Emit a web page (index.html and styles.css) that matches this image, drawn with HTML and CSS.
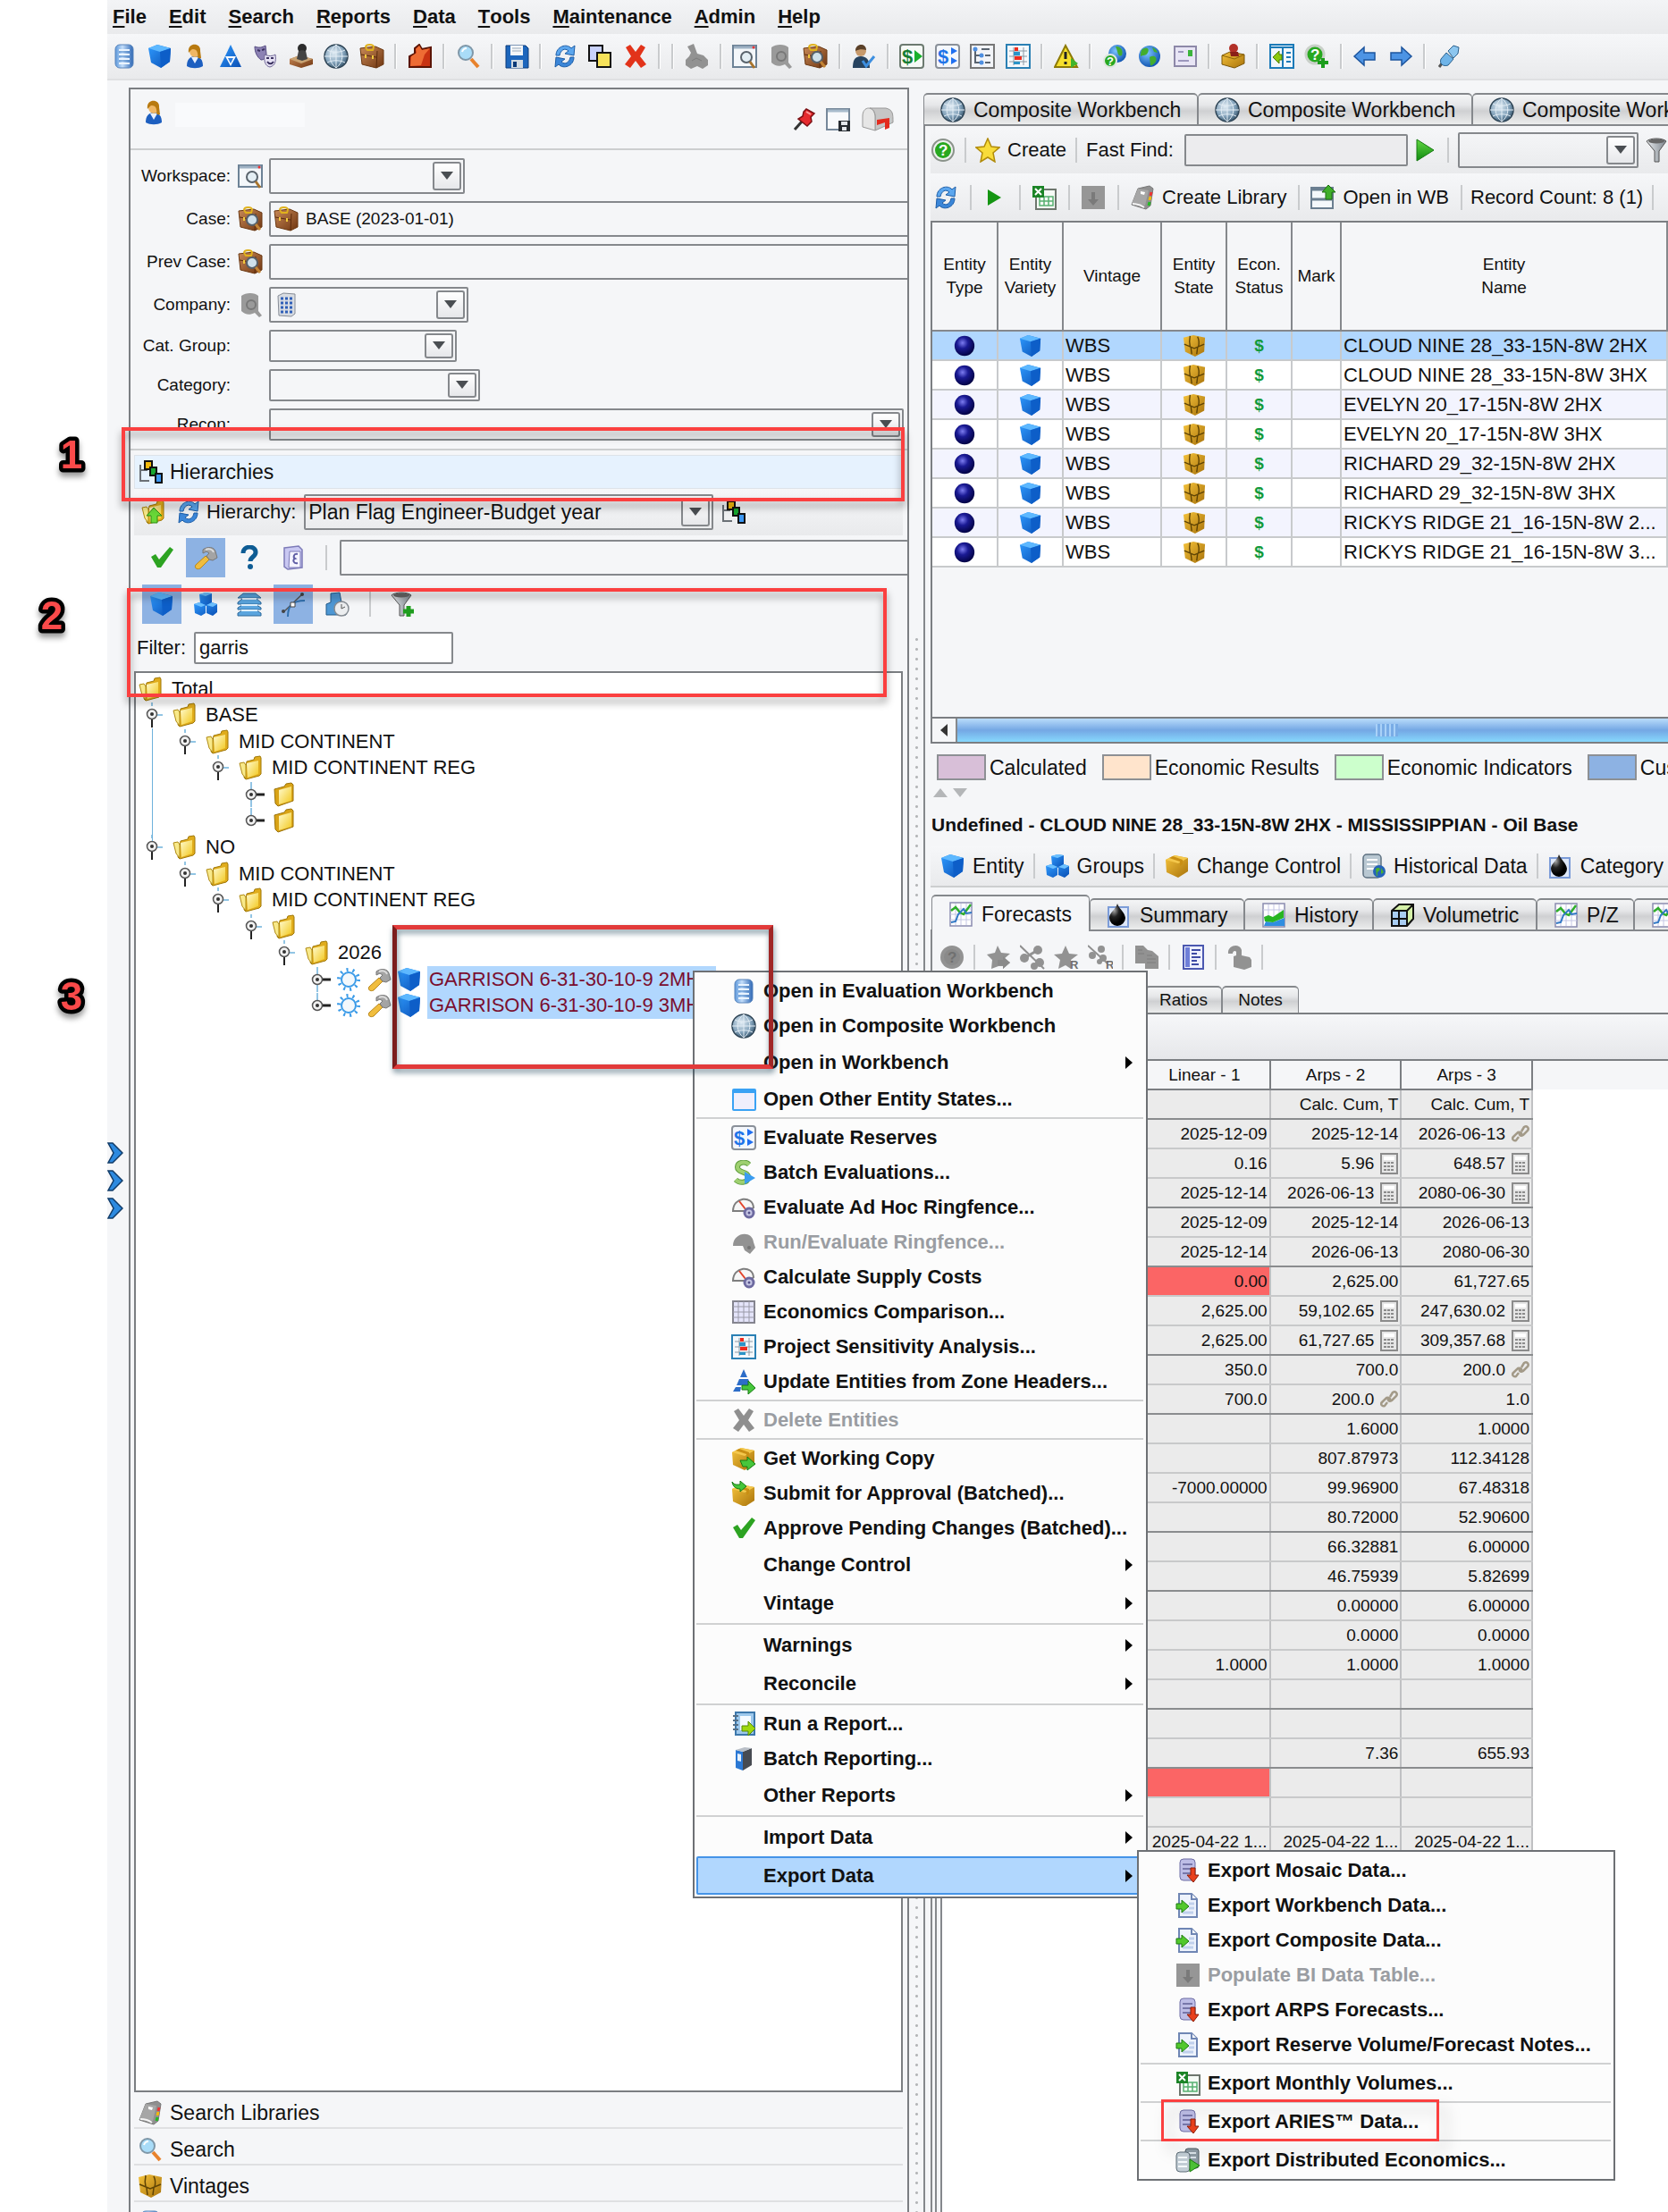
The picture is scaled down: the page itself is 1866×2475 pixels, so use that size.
FILE: index.html
```html
<!DOCTYPE html>
<html lang="en">
<head>
    <meta charset="UTF-8">
    <meta name="viewport" content="width=device-width, initial-scale=1.0">
    <title>Reserves Workbench</title>
    <link rel="stylesheet" href="styles.css">
</head>
<body>
    <!-- Icon set -->
    <svg class="defs" width="0" height="0" aria-hidden="true">
        <defs>
            <linearGradient id="gBlue" x1="0" y1="0" x2="1" y2="1"><stop offset="0" stop-color="#2f9bff"/><stop offset="1" stop-color="#0a4fb4"/></linearGradient>
            <linearGradient id="gSky" x1="0" y1="0" x2="1" y2="0"><stop offset="0" stop-color="#5c97da"/><stop offset=".4" stop-color="#c4defa"/><stop offset="1" stop-color="#2c66b4"/></linearGradient>
            <linearGradient id="gBrown" x1="0" y1="0" x2="1" y2="1"><stop offset="0" stop-color="#c98a58"/><stop offset="1" stop-color="#6f3510"/></linearGradient>
            <linearGradient id="gGold" x1="0" y1="0" x2="1" y2="1"><stop offset="0" stop-color="#f5c33c"/><stop offset="1" stop-color="#a8720a"/></linearGradient>
            <linearGradient id="gYel" x1="0" y1="0" x2="1" y2="1"><stop offset="0" stop-color="#fffbd0"/><stop offset="1" stop-color="#f2c81e"/></linearGradient>
            <linearGradient id="gGreen" x1="0" y1="0" x2="0" y2="1"><stop offset="0" stop-color="#63d843"/><stop offset="1" stop-color="#0f8a10"/></linearGradient>
            <linearGradient id="gSteel" x1="0" y1="0" x2="1" y2="0"><stop offset="0" stop-color="#e8ebee"/><stop offset="1" stop-color="#7d858d"/></linearGradient>
            <radialGradient id="gGlobe" cx=".4" cy=".35" r=".7"><stop offset="0" stop-color="#e2edf5"/><stop offset=".6" stop-color="#86a5bd"/><stop offset="1" stop-color="#33526a"/></radialGradient>
            <radialGradient id="gBall" cx=".4" cy=".35" r=".7"><stop offset="0" stop-color="#7c7cf0"/><stop offset=".4" stop-color="#1a1a94"/><stop offset="1" stop-color="#00003c"/></radialGradient>
            <radialGradient id="gEarth" cx=".4" cy=".35" r=".7"><stop offset="0" stop-color="#7cc4ff"/><stop offset="1" stop-color="#0b4fae"/></radialGradient>
            <radialGradient id="gDrop" cx=".3" cy=".3" r=".6"><stop offset="0" stop-color="#aaa"/><stop offset=".5" stop-color="#222"/><stop offset="1" stop-color="#000"/></radialGradient>
        </defs>
        <symbol id="db" viewBox="0 0 28 28"><rect x="4" y="1" width="20" height="26" rx="5" fill="url(#gSky)" stroke="#5a86bc"/><path d="M8 7h12M8 12h12M8 17h12M8 22h12" stroke="#eaf4ff" stroke-width="2"/><path d="M8 9h12M8 14h12M8 19h12" stroke="#4f86c6"/></symbol>
        <symbol id="cube" viewBox="0 0 28 28"><path d="M1 5 11 1l15 4-1 15-10 7L4 21Z" fill="url(#gBlue)"/><path d="m1 5 10-4 15 4-12 4Z" fill="#5db8ff"/><path d="m14 9 12-4-1 15-10 7Z" fill="#0d5ec8"/></symbol>
        <symbol id="user" viewBox="0 0 28 28"><path d="M5 25c0-7 3-11 9-11s9 4 9 11c-5 3-13 3-18 0Z" fill="#1d5fc0"/><path d="m10 15 4 7 4-7Z" fill="#e8f0ff"/><ellipse cx="14" cy="8" rx="6" ry="7" fill="#f0b765"/><path d="M7 10C5-2 21-2 20 8l1 8c-2 1-3 0-4-1 1-5-1-9-5-9-2 0-3 2-5 4Z" fill="#b87a10"/></symbol>
        <symbol id="tri" viewBox="0 0 28 28"><path d="M14 1 26 26H2Z" fill="url(#gBlue)"/><path d="M8 14h12l-6 11Z" fill="#fff"/><path d="M11 16h6l-3 6Z" fill="#2f7fe0"/></symbol>
        <symbol id="masks" viewBox="0 0 28 28"><path d="M2 3c5 2 8 1 12-1l1 9c0 5-3 7-6 7-4-3-7-8-7-15Z" fill="#8c82b4" stroke="#544a80"/><path d="M13 12c4 2 9 2 12 0 1 8 0 12-6 14-5-1-7-6-6-14Z" fill="#e6e2f4" stroke="#6d6494"/><path d="M15 16h3M20 16h3M16 20c2 3 5 3 7 0M5 7l3 1M10 7l3-1" stroke="#3a3160" stroke-width="2" fill="none"/></symbol>
        <symbol id="stamp" viewBox="0 0 28 28"><circle cx="15" cy="5" r="5" fill="#2c2c2c"/><path d="M13 7h4l3 10h-9Z" fill="#3c3c3c"/><path d="m1 17 11-4 15 4v6l-13 4-13-4Z" fill="url(#gBrown)"/><path d="m1 17 11-4 15 4-13 5Z" fill="#c9a373"/><path d="m11 8 8 0 2 9-6 2-6-2Z" fill="#444"/></symbol>
        <symbol id="globe" viewBox="0 0 28 28"><circle cx="14" cy="14" r="13" fill="url(#gGlobe)" stroke="#2f4556" stroke-width="1.5"/><path d="M14 1v26M1 14h26M4 7c6 3 14 3 20 0M4 21c6-3 14-3 20 0M14 1C5 8 5 20 14 27M14 1c9 7 9 19 0 26" fill="none" stroke="#e4eef6"/></symbol>
        <symbol id="case" viewBox="0 0 28 28"><path d="m1 5 17-2 9 4v16l-8 4L3 23Z" fill="url(#gBrown)" stroke="#6b3812"/><path d="M7 4c0-4 9-4 9 0M7 4l2 3h6l1-3" fill="none" stroke="#e0b21c" stroke-width="2"/><path d="m20 8-1 19M2 12l17 3" stroke="#5a2b0c"/><path d="M7 12v4M15 13v4" stroke="#f0c93c" stroke-width="2"/></symbol>
        <symbol id="case-find" viewBox="0 0 28 28"><use href="#case"/><circle cx="16" cy="15" r="6" fill="#cfe0ea" stroke="#55606a" stroke-width="2"/><path d="m20 20 5 6" stroke="#c38434" stroke-width="3"/></symbol>
        <symbol id="red-arrow" viewBox="0 0 28 28"><path d="M8 5 13 1l3 5 10-2v22H2V14l6-3Z" fill="#c93312" stroke="#5a1404" stroke-width="2"/><path d="m3 25 1-11 6-4-1-4 4-4 3 5 9-2-6 7-4 12Z" fill="#ee6c34"/></symbol>
        <symbol id="search" viewBox="0 0 28 28"><path d="m17 17 8 9" stroke="#e8822c" stroke-width="4"/><circle cx="11" cy="10" r="8" fill="#a9dcf8" stroke="#7f97a8" stroke-width="2"/><path d="M7 9c1-3 3-4 5-4" stroke="#fff" stroke-width="2" fill="none"/></symbol>
        <symbol id="save" viewBox="0 0 28 28"><path d="M2 2h22l3 3v22H2Z" fill="#1d66bc" stroke="#0c3a78"/><path d="M7 2h14v11H7Z" fill="#f4f6f8"/><path d="M9 5h10M9 8h10" stroke="#9ab"/><path d="M8 18h13v9H8Z" fill="#d3dbe2"/><path d="M10 20h4v6h-4Z" fill="#0c3a78"/></symbol>
        <symbol id="refresh" viewBox="0 0 28 28"><path d="M4 13C4 3 16-1 21 5l4-3-1 11-10-2 4-3C14 4 9 7 8 13Z" fill="#5ba6ee" stroke="#1b5ca6"/><path d="M24 15c0 10-12 14-17 8l-4 3 1-11 10 2-4 3c4 4 9 1 10-5Z" fill="#3b86d8" stroke="#1b5ca6"/></symbol>
        <symbol id="copy" viewBox="0 0 28 28"><path d="M2 2h15v17H2Z" fill="#c9d2fb" stroke="#111" stroke-width="2"/><path d="M11 10h15v16H11Z" fill="#f6e25a" stroke="#111" stroke-width="2"/></symbol>
        <symbol id="cross" viewBox="0 0 28 28"><path d="m3 4 5-3 6 8 6-8 5 3-6 10 7 9-6 4-6-8-6 8-6-4 7-9Z"/></symbol>
        <symbol id="gray-box" viewBox="0 0 28 28"><path d="m4 3 7-3 4 11 7 2 5 5v6l-6 4-6-3-7 3-6-4v-6l4-4 2-4Z" fill="#929292"/><path d="m9 19 5-3 6 3" stroke="#7c7c7c" fill="none"/></symbol>
        <symbol id="win-find" viewBox="0 0 28 28"><path d="M1 2h26v24H1Z" fill="#f4f7fa" stroke="#6d8296" stroke-width="2"/><path d="M2 4h24" stroke="#9fb2c4" stroke-width="3"/><circle cx="24" cy="4" r="1.5" fill="#e33"/><circle cx="16" cy="15" r="6" fill="#e3eef4" stroke="#59636c" stroke-width="2"/><path d="m20 20 5 7" stroke="#a9742c" stroke-width="3"/></symbol>
        <symbol id="gray-find" viewBox="0 0 28 28"><path d="M4 4c5-4 15-4 19 0v17l4 5-3 2-5-5c-6 3-11 2-15-2Z" fill="#9a9a9a"/><circle cx="15" cy="14" r="5" fill="none" stroke="#787878" stroke-width="2"/></symbol>
        <symbol id="user-check" viewBox="0 0 28 28"><path d="M2 27c0-8 2-13 9-13s10 5 10 13Z" fill="#27435f"/><circle cx="11" cy="8" r="6" fill="#c79a6c"/><path d="M5 8c0-9 12-9 12-1-4-1-8-1-12 1Z" fill="#5a4028"/><path d="m13 19 4 6 9-11" fill="none" stroke="#3d8fe0" stroke-width="3"/></symbol>
        <symbol id="tree-list" viewBox="0 0 28 28"><path d="M1 1h26v26H1Z" fill="#f2f4f8" stroke="#777" stroke-width="2"/><path d="M6 7v14h6M6 13h6M13 6h9M17 13h6M17 21h6" fill="none" stroke="#5a6470" stroke-width="2"/><circle cx="6" cy="6" r="2.5" fill="#4f8fe0"/><circle cx="13" cy="13" r="2.5" fill="#4f8fe0"/><circle cx="13" cy="21" r="2.5" fill="#4f8fe0"/></symbol>
        <symbol id="sens" viewBox="0 0 28 28"><path d="M1 1h26v26H1Z" fill="#f4f8fb" stroke="#2a80b4" stroke-width="2"/><path d="M4 8h20M4 14h20M4 20h20M9 4v20M20 4v20" stroke="#8b99a4"/><path d="M10 4h4v4h-4ZM10 14h8v4h-8Z" fill="#ee2b1e"/><path d="M9 9h7v4H9ZM9 20h7v3H9Z" fill="#2a94c8"/></symbol>
        <symbol id="warn" viewBox="0 0 28 28"><path d="M13 2 26 26H1Z" fill="#f6df2c" stroke="#8d7a06" stroke-width="2"/><path d="M13 9v8M13 20v3" stroke="#222" stroke-width="3"/><path d="m19 16 8 6-8 5Z" fill="#3fb52c"/></symbol>
        <symbol id="earth" viewBox="0 0 28 28"><circle cx="14" cy="14" r="12" fill="url(#gEarth)"/><path d="M6 6c6-3 8 0 6 4s-5 2-8 4c0-3 0-6 2-8ZM14 15c5-3 9 0 7 5-2 3-5 5-6 4ZM17 4c3 1 5 3 6 6l-4-1Z" fill="#43ad2e"/></symbol>
        <symbol id="mail" viewBox="0 0 28 28"><path d="M2 3h24v22H2Z" fill="#e8e5f5" stroke="#8d88a8" stroke-width="2"/><path d="M17 7h5v7h-5Z" fill="#3cb43c"/><path d="M6 9h6M6 19h12" stroke="#9c97bd" stroke-width="2"/></symbol>
        <symbol id="gold-stamp" viewBox="0 0 28 28"><path d="m1 13 9-4 16 3v10l-11 5-14-4Z" fill="url(#gGold)" stroke="#7a5608"/><path d="m1 13 14 4 11-5" fill="none" stroke="#8a6408"/><circle cx="14" cy="5" r="5" fill="#b23028"/><path d="M10 9h9l1 5h-9Z" fill="#8a1f18"/></symbol>
        <symbol id="dock" viewBox="0 0 28 28"><path d="M1 1h26v26H1Z" fill="#f0f6fb" stroke="#1b7ab8" stroke-width="2"/><path d="M1 4h26M15 4v23M19 10h5M19 15h5M19 20h5" stroke="#1b7ab8" stroke-width="2"/><path d="m4 15 7-7v4h3v6h-3v4Z" fill="#8cc90d" stroke="#4a7a04"/></symbol>
        <symbol id="arrow-left" viewBox="0 0 28 28"><path d="M2 14 13 4v6h12v8H13v6Z" fill="#4d94e4" stroke="#1d559e" stroke-width="1.5"/></symbol>
        <symbol id="arrow-right" viewBox="0 0 28 28"><path d="M26 14 15 4v6H3v8h12v6Z" fill="#4d94e4" stroke="#1d559e" stroke-width="1.5"/></symbol>
        <symbol id="plug" viewBox="0 0 28 28"><path d="m3 26 3-4" stroke="#555" stroke-width="3"/><path d="m5 17 6-7 8 7-6 7c-6 2-10-2-8-7Z" fill="#6fb4e8" stroke="#2b618c"/><path d="m13 8 6-6 6 2-1 7-5 5Z" fill="#8cc6ef" stroke="#2b618c"/></symbol>
        <symbol id="pin" viewBox="0 0 28 28"><path d="m3 25 8-9" stroke="#333" stroke-width="3"/><path d="m16 2 9 5-4 4 1 5-5 5-10-8 5-3 1-5Z" fill="#e62a2e" stroke="#7c1014" stroke-width="1.5"/><path d="m16 5 5 3" stroke="#ff9d9d" stroke-width="2"/></symbol>
        <symbol id="win-save" viewBox="0 0 28 28"><path d="M1 2h25v23H1Z" fill="#f8fafc" stroke="#76889a" stroke-width="2"/><path d="M2 4h23" stroke="#a8bccc" stroke-width="3"/><path d="M14 15h13v12H14Z" fill="#262b30"/><path d="M17 16h7v4h-7ZM18 22h5v4h-5Z" fill="#e4e8ec"/></symbol>
        <symbol id="mailbox" viewBox="0 0 36 28"><path d="M10 1h18c8 2 8 6 8 16l-20 9V10c0-5-3-9-6-9Z" fill="#c6c6c6" stroke="#999"/><path d="M2 10C2-2 15-2 16 10v16L2 22Z" fill="#e6e6e6" stroke="#999"/><path d="m18 14 14-2v11l-5 2v-8l-9 3Z" fill="#e32b1e"/></symbol>
        <symbol id="building" viewBox="0 0 28 28"><path d="m5 4 6-3 13 1v22l-4 3-14-1Z" fill="#d8dce2" stroke="#868c96"/><path d="M8 7h14M8 12h14M8 17h14M8 22h14" stroke="#2f5fb8" stroke-width="3" stroke-dasharray="3 2"/></symbol>
        <symbol id="hier" viewBox="0 0 28 28"><path d="M2 6v18h10M2 12h8" fill="none" stroke="#6b7076" stroke-width="2"/><path d="M7 2h8v9H7Z" fill="#f2b90c" stroke="#111" stroke-width="2"/><path d="M13 9h7v9h-7Z" fill="#17a52f" stroke="#111" stroke-width="2"/><path d="M19 16h7v10h-7Z" fill="#3d97f2" stroke="#111" stroke-width="2"/></symbol>
        <symbol id="folder" viewBox="0 0 28 28"><path d="m6 25 3-18 8-2 1-3 6-1 1 2v18l-2 2-15 4Z" fill="#e0ac1c" stroke="#a07808"/><path d="m9 9 13-3v15l-12 4Z" fill="url(#gYel)"/><path d="m8 26-4-5L1 9l5-1 2 3Z" fill="#f8e98a" stroke="#b08a12"/></symbol>
        <symbol id="folder-closed" viewBox="0 0 28 28"><path d="m3 8 11-3 2-3 6-1 2 2v18L7 27l-3-3Z" fill="#d9a316" stroke="#9a7208"/><path d="m8 9 14-4v16L8 25Z" fill="url(#gYel)"/></symbol>
        <symbol id="folder-up" viewBox="0 0 28 28"><use href="#folder"/><path d="m14 9 9 9h-5v8h-7v-8H6Z" fill="#69d838" stroke="#2d8a12"/></symbol>
        <symbol id="check" viewBox="0 0 28 28"><path d="m2 13 5-3 4 6L23 2l4 3-14 20h-4Z" fill="#2da322"/></symbol>
        <symbol id="wrench" viewBox="0 0 28 28"><path d="M3 22 14 12l4 4-10 10c-4 2-7-1-5-4Z" fill="#f0bd3e" stroke="#b8861a"/><path d="M11 5c5-4 13-3 14 2l2 7-5 3-4-1-3-4 3-3-3-2-4 2Z" fill="#a4a4a4" stroke="#777"/><path d="M14 5c4-2 8 0 9 3" fill="none" stroke="#ddd" stroke-width="2"/></symbol>
        <symbol id="question" viewBox="0 0 28 28"><path d="M7 9c0-9 14-9 14-1 0 5-6 5-6 10" fill="none" stroke="#0e5c94" stroke-width="5"/><circle cx="15" cy="24" r="3" fill="#0e5c94"/></symbol>
        <symbol id="clip" viewBox="0 0 28 28"><path d="M4 3 20 1l4 4v20l-16 2-4-3Z" fill="#c9c8f2" stroke="#7d7bb8" stroke-width="1.5"/><path d="M10 7h12v18H9Z" fill="#f5f4ff" stroke="#7d7bb8"/><path d="M19 10c-5-1-5 4-3 5-3 1-2 6 3 5" fill="none" stroke="#5f5da4" stroke-width="2"/></symbol>
        <symbol id="cubes" viewBox="0 0 28 28"><path d="m7 3 7-2 7 1v11l-6 3-7-3Z" fill="url(#gBlue)"/><path d="m7 3 7-2 7 1-7 3Z" fill="#6cc0ff"/><path d="m1 14 6-2 7 3v9l-5 3-7-3ZM15 15l6-3 6 2v9l-5 4-7-3Z" fill="url(#gBlue)"/><path d="m1 14 6-2 7 3-5 2ZM15 15l6-3 6 2-5 3Z" fill="#6cc0ff"/></symbol>
        <symbol id="layers" viewBox="0 0 28 28"><path d="M7 2h14l6 5H1ZM1 12l5-4h16l5 4v2H1ZM1 18l5-3h16l5 3v2H1ZM1 24l5-3h16l5 3v3H1Z" fill="#5ba5de" stroke="#2e699a"/><path d="M6 8h16M5 15h18M5 21h18" stroke="#dff0fc" stroke-width="2"/></symbol>
        <symbol id="curve" viewBox="0 0 28 28"><path d="M3 23 24 3" fill="none" stroke="#555" stroke-width="1.5"/><path d="M8 28c0-12 5-18 19-18" fill="none" stroke="#2f6fae" stroke-width="2"/><path d="M11 12h5v5h-5Z" fill="#fff" stroke="#444"/><circle cx="24" cy="3" r="2" fill="#444"/><circle cx="3" cy="22" r="2" fill="#444"/></symbol>
        <symbol id="cubes-clock" viewBox="0 0 28 28"><path d="m7 2 10-1 2 11 5 3v11H2V14l5-2Z" fill="#4d97d4" stroke="#235a8a"/><circle cx="19" cy="19" r="8" fill="#eceef0" stroke="#858b92" stroke-width="1.5"/><path d="M19 14v5l4-2" fill="none" stroke="#555"/></symbol>
        <symbol id="funnel" viewBox="0 0 28 28"><path d="M1 4c4-4 18-4 22 0l-8 11v12h-5V15Z" fill="url(#gSteel)" stroke="#555"/><ellipse cx="12" cy="4" rx="9" ry="2.5" fill="#666"/></symbol>
        <symbol id="funnel-plus" viewBox="0 0 28 28"><use href="#funnel"/><path d="M20 16v12M14 22h12" stroke="#1f9d1f" stroke-width="5"/></symbol>
        <symbol id="star" viewBox="0 0 28 28"><path d="m14 1 4 9 9 1-7 6 2 10-8-5-8 5 2-10-7-6 9-1Z" fill="#f8dc3a" stroke="#b18b0a" stroke-width="1.5"/></symbol>
        <symbol id="play" viewBox="0 0 28 28"><path d="m4 2 19 12L4 26Z" fill="url(#gGreen)" stroke="#177a12"/></symbol>
        <symbol id="play-small" viewBox="0 0 28 28"><path d="m6 5 15 9-15 9Z" fill="#149512"/></symbol>
        <symbol id="excel" viewBox="0 0 28 28"><path d="M5 5h22v22H5Z" fill="#f5faf5" stroke="#6d766d" stroke-width="2"/><path d="M9 13h15v10H9ZM9 18h15M14 13v10M19 13v10" fill="none" stroke="#57b070" stroke-width="1.5"/><path d="M1 1h13v13H1Z" fill="#1b8426"/><path d="m4 4 7 7M11 4l-7 7" stroke="#fff" stroke-width="2"/></symbol>
        <symbol id="gray-down" viewBox="0 0 28 28"><path d="M1 1h26v26H1Z" fill="#969696"/><path d="M12 8h4v8h4l-6 7-6-7h4Z" fill="#7a7a7a"/></symbol>
        <symbol id="book" viewBox="0 0 28 28"><path d="m9 4 13-3 4 3-3 19-5 4-16-5Z" fill="#8f8f8f" stroke="#777"/><path d="m9 4 12 2-4 17L2 21Z" fill="#a6a6a6"/><path d="M3 21c5 0 9 1 13 4" fill="none" stroke="#f4f4f4" stroke-width="2"/><path d="m24 8-1 4" stroke="#e33" stroke-width="3"/><path d="m23 13-1 4" stroke="#f2b90c" stroke-width="3"/><path d="m22 19-1 4" stroke="#2b2" stroke-width="3"/><path d="m12 7 5 1-1 3-4-1Z" fill="#fff"/></symbol>
        <symbol id="open-wb" viewBox="0 0 28 28"><path d="M1 3h24v23H1Z" fill="#f4f8fb" stroke="#6a7e90" stroke-width="2"/><path d="M2 5h23M2 16h23" stroke="#6a7e90" stroke-width="3"/><path d="m20 0 8 8h-4v8h-7V8h-4Z" fill="#3fae2a" stroke="#1e6e12"/></symbol>
        <symbol id="ball" viewBox="0 0 28 28"><circle cx="14" cy="14" r="12" fill="url(#gBall)"/></symbol>
        <symbol id="vintage" viewBox="0 0 28 28"><path d="M1 4 13 1l14 3-1 17-11 6L3 21Z" fill="url(#gGold)"/><path d="M9 2c-1 5-1 9 0 13l5 2 5-2c1-4 1-8-1-12M2 12l12 5 12-5M10 16l1 8M18 16l-1 8" fill="none" stroke="#5e4304" stroke-width="1.5"/></symbol>
        <symbol id="box" viewBox="0 0 28 28"><path d="M1 7 11 2l15 3v15l-11 7L2 21Z" fill="url(#gGold)"/><path d="m1 7 10-5 15 3-11 6Z" fill="#f4c84c"/><path d="m5 5 12 4v5l3-2V7L9 3Z" fill="#c98f14"/></symbol>
        <symbol id="box-out" viewBox="0 0 28 28"><use href="#box"/><path d="M10 16h8v-4l9 8-9 7v-4h-5Z" fill="#46c63b" stroke="#177a12"/></symbol>
        <symbol id="box-in" viewBox="0 0 28 28"><use href="#box" y="2"/><path d="M1 1c3 4 5 3 9 3V0l7 6-7 6V9C6 9 2 7 1 1Z" fill="#46c63b" stroke="#177a12"/></symbol>
        <symbol id="history-db" viewBox="0 0 28 28"><rect x="2" y="1" width="20" height="26" rx="4" fill="#b9c8d2" stroke="#5d7080" stroke-width="1.5"/><path d="M6 7h12M6 12h12M6 17h10" stroke="#fff" stroke-width="2"/><circle cx="20" cy="20" r="7" fill="#2563b8"/><path d="M16 17c5-3 6 1 3 3s1 5-2 5ZM22 16l3 5-3 2Z" fill="#49b032"/></symbol>
        <symbol id="drop" viewBox="0 0 28 28"><path d="M2 5h22v22H2Z" fill="#dfe8f8" stroke="#7c9cd8" stroke-width="2"/><path d="M12 1c2 6 8 9 9 16a9 9 0 0 1-18 0c0-6 7-9 9-16Z" fill="url(#gDrop)"/></symbol>
        <symbol id="chart" viewBox="0 0 28 28"><path d="M2 1h24v26H2Z" fill="#fff" stroke="#8a8cb0" stroke-width="1.5"/><path d="M8 2v24M14 2v24M20 2v24M2 8h24M2 14h24M2 20h24" stroke="#c4c6e4"/><path d="m3 10 5-4 5 6 4 2L25 3" fill="none" stroke="#2eae2a" stroke-width="2.5"/><path d="m3 23 5-1 3-8 6-6 3 5 6-1" fill="none" stroke="#2e76c4" stroke-width="2"/></symbol>
        <symbol id="area" viewBox="0 0 28 28"><path d="M2 1h24v26H2Z" fill="#fff" stroke="#8a8cb0" stroke-width="1.5"/><path d="M8 2v24M14 2v24M20 2v24M2 8h24" stroke="#c4c6e4"/><path d="m3 26 2-5 8 1 13-5v9Z" fill="#2f8ee0"/><path d="m3 16 5-2 5 2L25 8v9l-12 5-9-1Z" fill="#27b522"/></symbol>
        <symbol id="vol" viewBox="0 0 28 28"><path d="M2 9 10 2h16v16l-7 8H2Z" fill="#d4f0a8"/><path d="M2 9h17v17H2Z" fill="#a9cdf2"/><path d="M2 9 10 2h16v16l-7 8H2ZM2 9h17v17M19 9l7-7M10 9v17M2 18h17" fill="none" stroke="#111" stroke-width="2"/></symbol>
        <symbol id="g-star" viewBox="0 0 28 28"><path d="m13 1 4 8 10 1-7 6 7 4-8 7v-3h-5l-8 3 1-10-6-6 9-2Z" fill="#929292"/><path d="M13 17h6v-4l8 7-8 7v-4h-6Z" fill="#8a8a8a"/></symbol>
        <symbol id="g-pct" viewBox="0 0 28 28"><path d="m0 1 27 26" stroke="#8f8f8f" stroke-width="2"/><circle cx="20" cy="6" r="5" fill="#929292"/><circle cx="5" cy="15" r="5" fill="#929292"/><circle cx="22" cy="20" r="5" fill="#929292"/><circle cx="16" cy="24" r="4" fill="#929292"/><path d="m5 15 15-9" stroke="#929292" stroke-width="3"/></symbol>
        <symbol id="g-copy" viewBox="0 0 28 28"><path d="M1 1h9l5 5 5 1 7 6v14H12v-6H1Z" fill="#929292"/><path d="M14 12h6M14 16h10M14 20h10M4 6h5M4 10h7" stroke="#7c7c7c"/></symbol>
        <symbol id="g-lock" viewBox="0 0 28 28"><path d="M1 10C0 0 14-2 16 6v6l9 2 2 3v8l-8 3-12-3V13l3-1V8c-1-2-4-1-4 2Z" fill="#929292"/></symbol>
        <symbol id="sheet" viewBox="0 0 28 28"><path d="M3 1h22v26H3Z" fill="#eef0ff" stroke="#4b58b0" stroke-width="2"/><path d="M5 3h5v22H5Z" fill="#6f7fd8"/><path d="M12 6h10M12 10h6M12 14h10M12 18h6M12 22h8" stroke="#3d4aa4" stroke-width="2"/></symbol>
        <symbol id="window" viewBox="0 0 28 28"><rect x="2" y="3" width="25" height="23" rx="1" fill="#f0effc" stroke="#3aa2f4" stroke-width="2"/><path d="M2 5h25" stroke="#3aa2f4" stroke-width="4"/></symbol>
        <symbol id="batch" viewBox="0 0 28 28"><path d="M20 5c-4-4-13-3-13 3 0 7 13 4 12 12-1 6-10 6-14 2M13 1v3M13 24v3" fill="none" stroke="#5f9d3d" stroke-width="6"/><path d="M20 5c-4-4-13-3-13 3 0 7 13 4 12 12-1 6-10 6-14 2" fill="none" stroke="#9fd070" stroke-width="4"/><path d="m15 13 12 7-12 7Z" fill="#3a9cf0"/></symbol>
        <symbol id="gauge" viewBox="0 0 28 28"><path d="M2 18C2 2 24 0 25 14l-4 4Z" fill="#f6f6f6" stroke="#7e7e7e" stroke-width="2"/><path d="m9 7 7 9" stroke="#e2432c" stroke-width="2"/><circle cx="20" cy="20" r="5" fill="#c6c6e4" stroke="#6d6aa0" stroke-width="3"/><circle cx="20" cy="20" r="1.5" fill="#55528a"/></symbol>
        <symbol id="g-gauge" viewBox="0 0 28 28"><path d="M2 18C2 2 24 0 25 14l2 6-6 7-6-4-2-5Z" fill="#929292"/><circle cx="20" cy="20" r="2" fill="#737373"/></symbol>
        <symbol id="grid" viewBox="0 0 28 28"><path d="M2 2h24v24H2Z" fill="#e4e4fa" stroke="#84848e" stroke-width="2"/><path d="M8 2v24M14 2v24M20 2v24M2 8h24M2 14h24M2 20h24" stroke="#9a9aa8"/></symbol>
        <symbol id="zone" viewBox="0 0 28 28"><path d="m14 0 4 9h-8ZM9 11h10l3 7H6ZM5 20h6l-1 5H2Z" fill="#2d6dc8"/><path d="M12 18h7v-5l8 8-8 7v-5h-7Z" fill="#46c63b" stroke="#177a12"/></symbol>
        <symbol id="report" viewBox="0 0 28 28"><path d="M5 1h21v25H5Z" fill="#9dc8ec" stroke="#3d78ac" stroke-width="2"/><path d="M10 5h12v16H10Z" fill="#f5faff"/><path d="M2 5h6M2 10h6M2 15h6M2 20h6" stroke="#556f86" stroke-width="2"/><path d="M12 16h7v-5l8 8-8 8v-5h-7Z" fill="#9ed80e" stroke="#568a04"/></symbol>
        <symbol id="binder" viewBox="0 0 28 28"><path d="m5 4 8 2v21l-8-3Z" fill="#2b78d4"/><path d="m13 6 10-4v19l-10 6Z" fill="#474b52"/><path d="m5 4 10-3 8 1-10 4Z" fill="#b9bfc7"/><path d="m7 8 4 1v8l-4-1Z" fill="#e6f1fc"/></symbol>
        <symbol id="db-export" viewBox="0 0 28 28"><rect x="5" y="1" width="17" height="24" rx="4" fill="#bdbde6" stroke="#6d6da4"/><path d="M8 7h11M8 12h11M8 17h11" stroke="#77a" stroke-width="2"/><path d="M17 11h5v8h4l-6 8-7-8h4Z" fill="#e8401c" stroke="#8c1c06"/></symbol>
        <symbol id="doc-export" viewBox="0 0 28 28"><path d="M4 1h14l6 6v20H4Z" fill="#eef3fc" stroke="#6f86b4" stroke-width="2"/><path d="M18 1v6h6" fill="#fff" stroke="#6f86b4" stroke-width="2"/><path d="M15 12h6M15 17h6M8 22h12" stroke="#c0d0ec" stroke-width="3"/><path d="M1 12h6V8l8 7-8 7v-4H1Z" fill="#52c82c" stroke="#1d7d10"/></symbol>
        <symbol id="db-run" viewBox="0 0 28 28"><rect x="11" y="1" width="15" height="22" rx="3" fill="#8d9ba4" stroke="#4d5961"/><path d="M14 6h9M14 11h9" stroke="#dbe4ea" stroke-width="2"/><rect x="1" y="5" width="15" height="22" rx="4" fill="#c3ced6" stroke="#5d6c76"/><path d="M3 11h10M3 16h10M3 21h10" stroke="#f6fafc" stroke-width="2"/><path d="m16 13 11 7-11 7Z" fill="#4cc036" stroke="#1d7d10"/></symbol>
        <symbol id="calc" viewBox="0 0 20 24"><path d="M1 1h18v22H1Z" fill="#e6e6e6" stroke="#8b8b8b" stroke-width="2"/><path d="M4 4h12v4H4Z" fill="#fff"/><path d="M4 11h12M4 15h12M4 19h12" stroke="#8b8b8b" stroke-width="2" stroke-dasharray="3 1"/></symbol>
        <symbol id="link" viewBox="0 0 20 24"><path d="m8 15-3 4c-3 1-5-2-3-4l5-5c3-1 5 1 4 4M11 9l3-5c3-2 6 1 4 4l-5 5c-3 2-5 0-4-3" fill="none" stroke="#a39a88" stroke-width="2.5"/></symbol>
        <symbol id="sun" viewBox="0 0 28 28"><circle cx="14" cy="14" r="11" fill="none" stroke="#3b9be8" stroke-width="4" stroke-dasharray="2 5"/><circle cx="14" cy="14" r="8" fill="#f3f8fc" stroke="#3b9be8" stroke-width="2"/></symbol>
        <symbol id="knob-open" viewBox="0 0 28 28"><path d="M8 14h12M8-2v6" stroke="#6fb2dc" stroke-width="1.5"/><path d="M8 16v12" stroke="#222" stroke-width="2"/><circle cx="8" cy="13" r="5.5" fill="#f2f2f2" stroke="#555" stroke-width="1.5"/><circle cx="8" cy="13" r="2" fill="#333"/></symbol>
        <symbol id="knob-shut" viewBox="0 0 28 28"><path d="M8-2v32" stroke="#6fb2dc" stroke-width="1.5"/><path d="M12 14h11" stroke="#222" stroke-width="3"/><circle cx="8" cy="14" r="5.5" fill="#f2f2f2" stroke="#555" stroke-width="1.5"/><circle cx="8" cy="14" r="2" fill="#333"/></symbol>
        <symbol id="knob-end" viewBox="0 0 28 28"><path d="M8-2v12" stroke="#6fb2dc" stroke-width="1.5"/><path d="M12 14h11" stroke="#222" stroke-width="3"/><circle cx="8" cy="14" r="5.5" fill="#f2f2f2" stroke="#555" stroke-width="1.5"/><circle cx="8" cy="14" r="2" fill="#333"/></symbol>
        <symbol id="chev" viewBox="0 0 18 24"><path d="M1 1h5l11 11L6 23H1l6-11Z" fill="#2d8ae0" stroke="#123c68" stroke-width="1.5"/></symbol>
        <symbol id="down" viewBox="0 0 16 10"><path d="M1 0h14L8 9Z" fill="#4a4e52"/></symbol>
        <symbol id="next" viewBox="0 0 8 14"><path d="m0 0 8 7-8 7Z" fill="#000"/></symbol>
    </svg>
    <!-- Icons that carry a character -->
    <svg class="hidden" aria-hidden="true">
        <symbol id="eval-green" viewBox="0 0 28 28"><rect x="1" y="1" width="26" height="26" rx="3" fill="#f6faf6" stroke="#6c7a70" stroke-width="2"/><text x="3" y="22" class="glyph" fill="#167d32">$</text><path d="m17 7 9 7-9 7Z" fill="#18b02c"/></symbol>
        <symbol id="eval-blue" viewBox="0 0 28 28"><rect x="1" y="1" width="26" height="26" rx="3" fill="#f4f7fc" stroke="#8a9099" stroke-width="2"/><text x="3" y="22" class="glyph" fill="#1f74e8">$</text><path d="m18 4 7 4-7 4ZM18 15l7 4-7 4Z" fill="#1f6ff0"/></symbol>
        <symbol id="help-ball" viewBox="0 0 28 28"><circle cx="14" cy="14" r="12" fill="#eef1ee" stroke="#8b938b" stroke-width="2"/><circle cx="14" cy="14" r="9" fill="#28a81f"/><text x="9" y="20" class="glyph-s" fill="#fff">?</text></symbol>
        <symbol id="help-earth" viewBox="0 0 28 28"><circle cx="17" cy="11" r="10" fill="url(#gEarth)"/><path d="M15 3c6-1 9 5 7 10-5 2-4-4-7-10Z" fill="#43ad2e"/><circle cx="9" cy="19" r="7" fill="#28a81f" stroke="#dfe6df" stroke-width="2"/><text x="5" y="24" class="glyph-xs" fill="#fff">?</text></symbol>
        <symbol id="help-plus" viewBox="0 0 28 28"><circle cx="12" cy="12" r="10" fill="#28a81f" stroke="#c9d0c9" stroke-width="3"/><text x="7" y="18" class="glyph-s" fill="#fff">?</text><path d="M21 16v11M15 21h12" stroke="#1c9d1c" stroke-width="4"/></symbol>
        <symbol id="g-help" viewBox="0 0 28 28"><circle cx="14" cy="14" r="13" fill="#929292"/><circle cx="14" cy="14" r="9" fill="#8a8a8a"/><text x="9" y="20" class="glyph-s" fill="#707070">?</text></symbol>
        <symbol id="g-star-r" viewBox="0 0 28 28"><path d="m13 1 4 9 10 1-8 6v10l-6-4-8 4 2-10-7-6 9-1Z" fill="#929292"/><text x="18" y="27" class="glyph-xs" fill="#6f6f6f">R</text></symbol>
        <symbol id="g-pct-r" viewBox="0 0 28 28"><path d="m0 1 22 20" stroke="#8f8f8f" stroke-width="2"/><circle cx="15" cy="5" r="4" fill="#929292"/><circle cx="5" cy="12" r="4" fill="#929292"/><circle cx="17" cy="15" r="4" fill="#929292"/><circle cx="13" cy="19" r="3" fill="#929292"/><text x="20" y="27" class="glyph-xs" fill="#6f6f6f">R</text></symbol>
    </svg>

    <div class="app">
        <!-- Menu bar -->
        <nav class="menubar">
            <button><u>F</u>ile</button>
            <button><u>E</u>dit</button>
            <button><u>S</u>earch</button>
            <button><u>R</u>eports</button>
            <button><u>D</u>ata</button>
            <button><u>T</u>ools</button>
            <button><u>M</u>aintenance</button>
            <button><u>A</u>dmin</button>
            <button><u>H</u>elp</button>
        </nav>

        <!-- Main toolbar -->
        <div class="toolbar">
            <div class="toolbar-items">
                <button aria-label="Database"><svg><use href="#db"/></svg></button>
                <button aria-label="Entity"><svg><use href="#cube"/></svg></button>
                <button aria-label="User"><svg><use href="#user"/></svg></button>
                <button aria-label="Zones"><svg><use href="#tri"/></svg></button>
                <button aria-label="Scenarios"><svg><use href="#masks"/></svg></button>
                <button aria-label="Stamp"><svg><use href="#stamp"/></svg></button>
                <button aria-label="Composite"><svg><use href="#globe"/></svg></button>
                <button aria-label="Case"><svg><use href="#case"/></svg></button>
                <i></i>
                <button aria-label="Import"><svg><use href="#red-arrow"/></svg></button>
                <i></i>
                <button aria-label="Search"><svg><use href="#search"/></svg></button>
                <i></i>
                <button aria-label="Save"><svg><use href="#save"/></svg></button>
                <i></i>
                <button aria-label="Refresh"><svg><use href="#refresh"/></svg></button>
                <button aria-label="Copy"><svg><use href="#copy"/></svg></button>
                <button aria-label="Delete"><svg class="red"><use href="#cross"/></svg></button>
                <i></i>
                <i></i>
                <button aria-label="Groups"><svg><use href="#gray-box"/></svg></button>
                <i></i>
                <button aria-label="Find workspace"><svg><use href="#win-find"/></svg></button>
                <button aria-label="Find company"><svg><use href="#gray-find"/></svg></button>
                <button aria-label="Find case"><svg><use href="#case-find"/></svg></button>
                <i></i>
                <button aria-label="Approve user"><svg><use href="#user-check"/></svg></button>
                <i></i>
                <button aria-label="Run economics"><svg><use href="#eval-green"/></svg></button>
                <button aria-label="Evaluate reserves"><svg><use href="#eval-blue"/></svg></button>
                <button aria-label="Tree"><svg><use href="#tree-list"/></svg></button>
                <button aria-label="Sensitivity"><svg><use href="#sens"/></svg></button>
                <i></i>
                <button aria-label="Warnings"><svg><use href="#warn"/></svg></button>
                <i></i>
                <button aria-label="Online help"><svg><use href="#help-earth"/></svg></button>
                <button aria-label="Web"><svg><use href="#earth"/></svg></button>
                <button aria-label="Mail"><svg><use href="#mail"/></svg></button>
                <i></i>
                <button aria-label="Release"><svg><use href="#gold-stamp"/></svg></button>
                <i></i>
                <button aria-label="Dock"><svg><use href="#dock"/></svg></button>
                <button aria-label="Add help"><svg><use href="#help-plus"/></svg></button>
                <i></i>
                <button aria-label="Back"><svg><use href="#arrow-left"/></svg></button>
                <button aria-label="Forward"><svg><use href="#arrow-right"/></svg></button>
                <i></i>
                <button aria-label="Connection"><svg><use href="#plug"/></svg></button>
            </div>
        </div>

        <div class="main">
            <div class="rail">
                <svg><use href="#chev"/></svg>
                <svg><use href="#chev"/></svg>
                <svg><use href="#chev"/></svg>
            </div>

            <!-- Left panel -->
            <section class="side">
                <div class="side-head">
                    <svg><use href="#user"/></svg>
                    <span class="user-name"></span>
                    <button aria-label="Pin"><svg><use href="#pin"/></svg></button>
                    <button aria-label="Save layout"><svg><use href="#win-save"/></svg></button>
                    <button aria-label="Inbox"><svg class="wide"><use href="#mailbox"/></svg></button>
                </div>

                <form class="settings">
                    <div class="line">
                        <label for="workspace">Workspace:</label>
                        <svg><use href="#win-find"/></svg>
                        <span class="combo w-workspace"><select id="workspace"><option></option></select><span><svg><use href="#down"/></svg></span></span>
                    </div>
                    <div class="line">
                        <label for="case-name">Case:</label>
                        <svg><use href="#case-find"/></svg>
                        <span class="field"><svg><use href="#case"/></svg><input id="case-name" type="text" value="BASE (2023-01-01)"></span>
                    </div>
                    <div class="line">
                        <label for="prev-case">Prev Case:</label>
                        <svg><use href="#case-find"/></svg>
                        <span class="field"><input id="prev-case" type="text"></span>
                    </div>
                    <div class="line">
                        <label for="company">Company:</label>
                        <svg><use href="#gray-find"/></svg>
                        <span class="combo w-company"><svg><use href="#building"/></svg><select id="company"><option></option></select><span><svg><use href="#down"/></svg></span></span>
                    </div>
                    <div class="line short">
                        <label for="cat-group">Cat. Group:</label>
                        <svg></svg>
                        <span class="combo w-group"><select id="cat-group"><option></option></select><span><svg><use href="#down"/></svg></span></span>
                    </div>
                    <div class="line short">
                        <label for="category">Category:</label>
                        <svg></svg>
                        <span class="combo w-category"><select id="category"><option></option></select><span><svg><use href="#down"/></svg></span></span>
                    </div>
                    <div class="line short">
                        <label for="recon">Recon:</label>
                        <svg></svg>
                        <span class="combo w-recon"><select id="recon"><option></option></select><span><svg><use href="#down"/></svg></span></span>
                    </div>
                </form>

                <div class="side-body">
                    <button class="stack-title"><svg><use href="#hier"/></svg>Hierarchies</button>

                    <div class="hier-row">
                        <svg><use href="#folder-up"/></svg>
                        <svg><use href="#refresh"/></svg>
                        <label for="hierarchy">Hierarchy:</label>
                        <span class="combo w-hier"><select id="hierarchy"><option>Plan Flag Engineer-Budget year</option></select><span><svg><use href="#down"/></svg></span></span>
                        <svg><use href="#hier"/></svg>
                    </div>

                    <div class="tools">
                        <button aria-label="Apply"><svg><use href="#check"/></svg></button>
                        <button class="on" aria-label="Working"><svg><use href="#wrench"/></svg></button>
                        <button aria-label="Help"><svg><use href="#question"/></svg></button>
                        <button aria-label="Archive"><svg><use href="#clip"/></svg></button>
                        <i></i>
                        <input class="quick" type="text" aria-label="Quick search">
                    </div>

                    <div class="tools">
                        <button class="on" aria-label="Entities"><svg><use href="#cube"/></svg></button>
                        <button aria-label="Groups"><svg><use href="#cubes"/></svg></button>
                        <button aria-label="Layers"><svg><use href="#layers"/></svg></button>
                        <button class="on" aria-label="Curves"><svg><use href="#curve"/></svg></button>
                        <button aria-label="History"><svg><use href="#cubes-clock"/></svg></button>
                        <i></i>
                        <button aria-label="Add filter"><svg><use href="#funnel-plus"/></svg></button>
                    </div>

                    <div class="filter">
                        <label for="filter">Filter:</label>
                        <input id="filter" type="text" value="garris">
                    </div>

                    <div class="tree-box">
                        <ul class="tree">
                            <li class="l0"><svg><use href="#folder"/></svg>Total</li>
                            <li class="l1"><svg class="knob"><use href="#knob-open"/></svg><svg><use href="#folder"/></svg>BASE</li>
                            <li class="l2"><svg class="knob"><use href="#knob-open"/></svg><svg><use href="#folder"/></svg>MID CONTINENT</li>
                            <li class="l3"><svg class="knob"><use href="#knob-open"/></svg><svg><use href="#folder"/></svg>MID CONTINENT REG</li>
                            <li class="l4"><svg class="knob"><use href="#knob-shut"/></svg><svg><use href="#folder-closed"/></svg></li>
                            <li class="l4"><svg class="knob"><use href="#knob-end"/></svg><svg><use href="#folder-closed"/></svg></li>
                            <li class="l1 last"><svg class="knob"><use href="#knob-open"/></svg><svg><use href="#folder"/></svg>NO</li>
                            <li class="l2"><svg class="knob"><use href="#knob-open"/></svg><svg><use href="#folder"/></svg>MID CONTINENT</li>
                            <li class="l3"><svg class="knob"><use href="#knob-open"/></svg><svg><use href="#folder"/></svg>MID CONTINENT REG</li>
                            <li class="l4"><svg class="knob"><use href="#knob-open"/></svg><svg><use href="#folder"/></svg></li>
                            <li class="l5"><svg class="knob"><use href="#knob-open"/></svg><svg><use href="#folder"/></svg>2026</li>
                            <li class="l6"><svg class="knob"><use href="#knob-shut"/></svg><svg><use href="#sun"/></svg><svg><use href="#wrench"/></svg><svg><use href="#cube"/></svg><mark>GARRISON 6-31-30-10-9 2MH</mark></li>
                            <li class="l6"><svg class="knob"><use href="#knob-end"/></svg><svg><use href="#sun"/></svg><svg><use href="#wrench"/></svg><svg><use href="#cube"/></svg><mark>GARRISON 6-31-30-10-9 3MH</mark></li>
                        </ul>
                    </div>

                    <div class="stack">
                        <button><svg><use href="#book"/></svg>Search Libraries</button>
                        <button><svg><use href="#search"/></svg>Search</button>
                        <button><svg><use href="#vintage"/></svg>Vintages</button>
                        <button aria-label="Database"><svg><use href="#db"/></svg></button>
                    </div>
                </div>
            </section>

            <div class="splitter"></div>

            <!-- Right panel -->
            <section class="work">
                <div class="tabs">
                    <button><svg><use href="#globe"/></svg>Composite Workbench</button>
                    <button><svg><use href="#globe"/></svg>Composite Workbench</button>
                    <button><svg><use href="#globe"/></svg>Composite Workbench</button>
                </div>

                <div class="work-body">
                    <div class="bar">
                        <button aria-label="Help"><svg><use href="#help-ball"/></svg></button>
                        <i></i>
                        <button><svg><use href="#star"/></svg>Create</button>
                        <i></i>
                        <label for="fast-find">Fast Find:</label>
                        <input id="fast-find" type="text">
                        <button aria-label="Go"><svg><use href="#play"/></svg></button>
                        <i></i>
                        <span class="combo w-find"><select aria-label="Saved filter"><option></option></select><span><svg><use href="#down"/></svg></span></span>
                        <button aria-label="Filter"><svg><use href="#funnel"/></svg></button>
                    </div>
                    <div class="bar">
                        <button class="pad" aria-label="Refresh"><svg><use href="#refresh"/></svg></button>
                        <i></i>
                        <button class="pad" aria-label="Run"><svg><use href="#play-small"/></svg></button>
                        <i></i>
                        <button class="pad" aria-label="Excel"><svg><use href="#excel"/></svg></button>
                        <i></i>
                        <button class="pad" aria-label="Load"><svg><use href="#gray-down"/></svg></button>
                        <i></i>
                        <button class="pad"><svg><use href="#book"/></svg>Create Library</button>
                        <i></i>
                        <button class="pad"><svg><use href="#open-wb"/></svg>Open in WB</button>
                        <i></i>
                        <span>Record Count: 8 (1)</span>
                        <i></i>
                    </div>

                    <div class="grid-wrap">
                        <table class="entities">
                            <colgroup><col class="c-icon"><col class="c-icon"><col class="c-vintage"><col class="c-icon"><col class="c-icon"><col class="c-mark"><col></colgroup>
                            <thead>
                                <tr><th>Entity Type</th><th>Entity Variety</th><th>Vintage</th><th>Entity State</th><th>Econ. Status</th><th>Mark</th><th>Entity<br>Name</th></tr>
                            </thead>
                            <tbody>
                                <tr class="sel"><td><svg><use href="#ball"/></svg></td><td><svg><use href="#cube"/></svg></td><td>WBS</td><td><svg><use href="#vintage"/></svg></td><td class="usd">$</td><td></td><td>CLOUD NINE 28_33-15N-8W 2HX</td></tr>
                                <tr><td><svg><use href="#ball"/></svg></td><td><svg><use href="#cube"/></svg></td><td>WBS</td><td><svg><use href="#vintage"/></svg></td><td class="usd">$</td><td></td><td>CLOUD NINE 28_33-15N-8W 3HX</td></tr>
                                <tr><td><svg><use href="#ball"/></svg></td><td><svg><use href="#cube"/></svg></td><td>WBS</td><td><svg><use href="#vintage"/></svg></td><td class="usd">$</td><td></td><td>EVELYN 20_17-15N-8W 2HX</td></tr>
                                <tr><td><svg><use href="#ball"/></svg></td><td><svg><use href="#cube"/></svg></td><td>WBS</td><td><svg><use href="#vintage"/></svg></td><td class="usd">$</td><td></td><td>EVELYN 20_17-15N-8W 3HX</td></tr>
                                <tr><td><svg><use href="#ball"/></svg></td><td><svg><use href="#cube"/></svg></td><td>WBS</td><td><svg><use href="#vintage"/></svg></td><td class="usd">$</td><td></td><td>RICHARD 29_32-15N-8W 2HX</td></tr>
                                <tr><td><svg><use href="#ball"/></svg></td><td><svg><use href="#cube"/></svg></td><td>WBS</td><td><svg><use href="#vintage"/></svg></td><td class="usd">$</td><td></td><td>RICHARD 29_32-15N-8W 3HX</td></tr>
                                <tr><td><svg><use href="#ball"/></svg></td><td><svg><use href="#cube"/></svg></td><td>WBS</td><td><svg><use href="#vintage"/></svg></td><td class="usd">$</td><td></td><td>RICKYS RIDGE 21_16-15N-8W 2...</td></tr>
                                <tr><td><svg><use href="#ball"/></svg></td><td><svg><use href="#cube"/></svg></td><td>WBS</td><td><svg><use href="#vintage"/></svg></td><td class="usd">$</td><td></td><td>RICKYS RIDGE 21_16-15N-8W 3...</td></tr>
                            </tbody>
                        </table>
                        <div class="scroll">
                            <button aria-label="Scroll left"><svg viewBox="0 0 8 14"><path d="M8 0 0 7l8 7Z" fill="#333"/></svg></button>
                            <div class="thumb"><span></span></div>
                        </div>
                    </div>

                    <div class="legend">
                        <span><b class="calculated"></b>Calculated</span>
                        <span><b class="results"></b>Economic Results</span>
                        <span><b class="indicators"></b>Economic Indicators</span>
                        <span><b class="custom"></b>Custom</span>
                    </div>
                    <div class="collapse">
                        <svg viewBox="0 0 40 12"><path d="M0 11 8 1l8 10ZM22 1h16l-8 10Z" fill="#b4b6b8"/></svg>
                    </div>

                    <h1>Undefined - CLOUD NINE 28_33-15N-8W 2HX - MISSISSIPPIAN - Oil Base</h1>

                    <div class="detail-bar">
                        <button><svg><use href="#cube"/></svg>Entity</button>
                        <i></i>
                        <button><svg><use href="#cubes"/></svg>Groups</button>
                        <i></i>
                        <button><svg><use href="#box"/></svg>Change Control</button>
                        <i></i>
                        <button><svg><use href="#history-db"/></svg>Historical Data</button>
                        <i></i>
                        <button><svg><use href="#drop"/></svg>Category</button>
                    </div>

                    <div class="tabs detail-tabs">
                        <button class="active t-forecasts"><svg><use href="#chart"/></svg>Forecasts</button>
                        <button class="t-summary"><svg><use href="#drop"/></svg>Summary</button>
                        <button class="t-history"><svg><use href="#area"/></svg>History</button>
                        <button class="t-vol"><svg><use href="#vol"/></svg>Volumetric</button>
                        <button class="t-pz"><svg><use href="#chart"/></svg>P/Z</button>
                        <button class="t-pz" aria-label="Chart"><svg><use href="#chart"/></svg></button>
                    </div>

                    <div class="detail">
                        <div class="detail-tools">
                            <button disabled aria-label="Help"><svg><use href="#g-help"/></svg></button>
                            <i></i>
                            <button disabled aria-label="New forecast"><svg><use href="#g-star"/></svg></button>
                            <button disabled aria-label="Percent"><svg><use href="#g-pct"/></svg></button>
                            <button disabled aria-label="New ratio"><svg><use href="#g-star-r"/></svg></button>
                            <button disabled aria-label="Ratio percent"><svg><use href="#g-pct-r"/></svg></button>
                            <i></i>
                            <button disabled aria-label="Copy"><svg><use href="#g-copy"/></svg></button>
                            <i></i>
                            <button aria-label="Report"><svg><use href="#sheet"/></svg></button>
                            <i></i>
                            <button disabled aria-label="Unlock"><svg><use href="#g-lock"/></svg></button>
                            <i></i>
                        </div>
                        <div class="sub-tabs">
                            <button>Ratios</button>
                            <button>Notes</button>
                        </div>
                        <div class="sub-body">
                            <div class="band"></div>
                            <div class="segments-wrap">
                                <table class="segments">
                                    <colgroup><col class="c-name"><col><col><col></colgroup>
                                    <thead><tr><th></th><th>Linear - 1</th><th>Arps - 2</th><th>Arps - 3</th></tr></thead>
                                    <tbody>
                                        <tr class="end"><td></td><td></td><td>Calc. Cum, T</td><td>Calc. Cum, T</td></tr>
                                        <tr><td></td><td>2025-12-09</td><td>2025-12-14</td><td>2026-06-13<svg><use href="#link"/></svg></td></tr>
                                        <tr><td></td><td>0.16</td><td>5.96<svg><use href="#calc"/></svg></td><td>648.57<svg><use href="#calc"/></svg></td></tr>
                                        <tr class="end"><td></td><td>2025-12-14</td><td>2026-06-13<svg><use href="#calc"/></svg></td><td>2080-06-30<svg><use href="#calc"/></svg></td></tr>
                                        <tr><td></td><td>2025-12-09</td><td>2025-12-14</td><td>2026-06-13</td></tr>
                                        <tr class="end"><td></td><td>2025-12-14</td><td>2026-06-13</td><td>2080-06-30</td></tr>
                                        <tr><td></td><td class="bad">0.00</td><td>2,625.00</td><td>61,727.65</td></tr>
                                        <tr><td></td><td>2,625.00</td><td>59,102.65<svg><use href="#calc"/></svg></td><td>247,630.02<svg><use href="#calc"/></svg></td></tr>
                                        <tr class="end"><td></td><td>2,625.00</td><td>61,727.65<svg><use href="#calc"/></svg></td><td>309,357.68<svg><use href="#calc"/></svg></td></tr>
                                        <tr><td></td><td>350.0</td><td>700.0</td><td>200.0<svg><use href="#link"/></svg></td></tr>
                                        <tr class="end"><td></td><td>700.0</td><td>200.0<svg><use href="#link"/></svg></td><td>1.0</td></tr>
                                        <tr><td></td><td></td><td>1.6000</td><td>1.0000</td></tr>
                                        <tr><td></td><td></td><td>807.87973</td><td>112.34128</td></tr>
                                        <tr><td></td><td>-7000.00000</td><td>99.96900</td><td>67.48318</td></tr>
                                        <tr class="end"><td></td><td></td><td>80.72000</td><td>52.90600</td></tr>
                                        <tr><td></td><td></td><td>66.32881</td><td>6.00000</td></tr>
                                        <tr class="end"><td></td><td></td><td>46.75939</td><td>5.82699</td></tr>
                                        <tr><td></td><td></td><td>0.00000</td><td>6.00000</td></tr>
                                        <tr><td></td><td></td><td>0.0000</td><td>0.0000</td></tr>
                                        <tr><td></td><td>1.0000</td><td>1.0000</td><td>1.0000</td></tr>
                                        <tr class="end"><td></td><td></td><td></td><td></td></tr>
                                        <tr><td></td><td></td><td></td><td></td></tr>
                                        <tr class="end"><td></td><td></td><td>7.36</td><td>655.93</td></tr>
                                        <tr><td></td><td class="bad"></td><td></td><td></td></tr>
                                        <tr><td></td><td></td><td></td><td></td></tr>
                                        <tr><td></td><td>2025-04-22 1...</td><td>2025-04-22 1...</td><td>2025-04-22 1...</td></tr>
                                    </tbody>
                                </table>
                            </div>
                        </div>
                    </div>
                </div>
            </section>
        </div>
    </div>

    <!-- Context menu -->
    <div class="menu context" role="menu">
        <button><svg><use href="#db"/></svg>Open in Evaluation Workbench</button>
        <button><svg><use href="#globe"/></svg>Open in Composite Workbench</button>
        <button class="more"><svg></svg>Open in Workbench<svg class="next"><use href="#next"/></svg></button>
        <button><svg><use href="#window"/></svg>Open Other Entity States...</button>
        <hr>
        <button><svg><use href="#eval-blue"/></svg>Evaluate Reserves</button>
        <button><svg><use href="#batch"/></svg>Batch Evaluations...</button>
        <button><svg><use href="#gauge"/></svg>Evaluate Ad Hoc Ringfence...</button>
        <button disabled><svg><use href="#g-gauge"/></svg>Run/Evaluate Ringfence...</button>
        <button><svg><use href="#gauge"/></svg>Calculate Supply Costs</button>
        <button><svg><use href="#grid"/></svg>Economics Comparison...</button>
        <button><svg><use href="#sens"/></svg>Project Sensitivity Analysis...</button>
        <button><svg><use href="#zone"/></svg>Update Entities from Zone Headers...</button>
        <hr>
        <button disabled><svg class="gray"><use href="#cross"/></svg>Delete Entities</button>
        <hr>
        <button><svg><use href="#box-out"/></svg>Get Working Copy</button>
        <button><svg><use href="#box-in"/></svg>Submit for Approval (Batched)...</button>
        <button><svg><use href="#check"/></svg>Approve Pending Changes (Batched)...</button>
        <button class="more"><svg></svg>Change Control<svg class="next"><use href="#next"/></svg></button>
        <button class="more"><svg></svg>Vintage<svg class="next"><use href="#next"/></svg></button>
        <hr>
        <button class="more"><svg></svg>Warnings<svg class="next"><use href="#next"/></svg></button>
        <button class="more"><svg></svg>Reconcile<svg class="next"><use href="#next"/></svg></button>
        <hr>
        <button><svg><use href="#report"/></svg>Run a Report...</button>
        <button><svg><use href="#binder"/></svg>Batch Reporting...</button>
        <button class="more"><svg></svg>Other Reports<svg class="next"><use href="#next"/></svg></button>
        <hr>
        <button class="more"><svg></svg>Import Data<svg class="next"><use href="#next"/></svg></button>
        <button class="more open"><svg></svg>Export Data<svg class="next"><use href="#next"/></svg></button>
    </div>

    <!-- Export submenu -->
    <div class="menu export" role="menu">
        <button><svg><use href="#db-export"/></svg>Export Mosaic Data...</button>
        <button><svg><use href="#doc-export"/></svg>Export Workbench Data...</button>
        <button><svg><use href="#doc-export"/></svg>Export Composite Data...</button>
        <button disabled><svg><use href="#gray-down"/></svg>Populate BI Data Table...</button>
        <button><svg><use href="#db-export"/></svg>Export ARPS Forecasts...</button>
        <button><svg><use href="#doc-export"/></svg>Export Reserve Volume/Forecast Notes...</button>
        <hr>
        <button><svg><use href="#excel"/></svg>Export Monthly Volumes...</button>
        <hr>
        <button><svg><use href="#db-export"/></svg>Export ARIES™ Data...</button>
        <hr>
        <button><svg><use href="#db-run"/></svg>Export Distributed Economics...</button>
    </div>

    <!-- Step markers -->
    <div class="box box-1"></div>
    <div class="box box-2"></div>
    <div class="box box-3"></div>
    <div class="box box-4"></div>
    <svg class="step step-1"><text x="30" y="46">1</text></svg>
    <svg class="step step-2"><text x="30" y="46">2</text></svg>
    <svg class="step step-3"><text x="30" y="46">3</text></svg>
</body>
</html>
```
FILE: styles.css
```css
/* Global styles */
* {
    box-sizing: border-box;
}
body {
    position: relative;
    margin: 0;
    height: 100vh;
    overflow: hidden;
    background: #fff;
    color: #111;
    font: 22px/26px "Liberation Sans", Arial, sans-serif;
}
button, input, select {
    font: inherit;
    color: inherit;
    margin: 0;
}
button {
    display: flex;
    align-items: center;
    padding: 0;
    border: none;
    background: none;
    white-space: nowrap;
}
svg {
    display: block;
    flex: none;
    width: 28px;
    height: 28px;
}
i {
    flex: none;
    width: 2px;
    height: 28px;
    background: #c9cbcd;
}
input {
    height: 36px;
    padding: 0 4px;
    border: 2px solid #85888c;
    border-radius: 2px;
    background: #fff;
}
.defs {
    position: absolute;
    width: 0;
    height: 0;
}
.hidden {
    display: none;
}
.glyph { font: bold 22px "Liberation Sans", sans-serif; }
.glyph-s { font: bold 17px "Liberation Sans", sans-serif; }
.glyph-xs { font: bold 13px "Liberation Sans", sans-serif; }
.red { fill: #e2331a; }
.gray { fill: #8f8f8f; }

/* Window */
.app {
    display: flex;
    flex-direction: column;
    height: 100%;
    margin-left: 120px;
    background: #f5f6f8;
}
.menubar {
    display: flex;
    align-items: center;
    gap: 25px;
    height: 38px;
    padding-left: 6px;
    background: linear-gradient(#f3f4f6, #e9eaec);
    font-weight: bold;
}
.menubar u {
    text-underline-offset: 3px;
}
.toolbar {
    height: 52px;
    padding: 11px 5px 0;
    border-bottom: 2px solid #dfe0e2;
    background: linear-gradient(#f6f7f9, #e9eaec);
}
.toolbar-items {
    display: flex;
    justify-content: space-between;
    max-width: 1510px;
}
.toolbar-items i {
    width: 3px;
    border-right: 1px solid #fff;
}
.main {
    display: grid;
    grid-template-columns: 24px 50% 16px 1fr;
    flex: 1;
    min-height: 0;
}
.rail {
    display: flex;
    flex-direction: column;
    gap: 7px;
    padding-top: 1188px;
}
.rail svg {
    width: 18px;
    height: 24px;
}
.splitter {
    margin: 620px 5px 0 6px;
    background: radial-gradient(circle, #b4b6b8 1px, transparent 2px) 0 0 / 5px 11px;
}

/* Drop-downs */
.combo {
    display: flex;
    align-items: center;
    height: 40px;
    padding: 0 2px 0 3px;
    border: 2px solid #85888c;
    border-radius: 2px;
}
.combo select {
    flex: 1;
    min-width: 0;
    height: 100%;
    padding: 0;
    border: none;
    background: none;
    appearance: none;
}
.combo > span {
    display: flex;
    align-items: center;
    justify-content: center;
    width: 32px;
    align-self: stretch;
    margin: 2px 0;
    border: 2px solid #85888c;
    border-radius: 3px;
    background: linear-gradient(#fff, #e6e7ea);
}
.combo > span svg {
    width: 16px;
    height: 10px;
}
.w-workspace { width: 219px; }
.w-company { width: 223px; }
.w-group { width: 210px; }
.w-category { width: 236px; }
.w-recon { flex: 1; margin-right: 4px; }
.w-hier { width: 458px; font-size: 23px; }
.w-find { width: 202px; }

/* Left panel */
.side {
    display: flex;
    flex-direction: column;
    min-height: 0;
    margin-top: 8px;
    border: 2px solid #7b7e82;
    border-bottom: none;
    overflow: hidden;
}
.side-head {
    display: flex;
    align-items: center;
    gap: 10px;
    height: 68px;
    padding: 2px 15px 0 12px;
    border-bottom: 2px solid #cccecf;
}
.side-head > svg {
    margin-bottom: 16px;
}
.user-name {
    width: 145px;
    height: 27px;
    margin: 0 auto 12px 0;
    background: #f9fafc;
}
.side-head .wide {
    width: 38px;
}
.settings {
    display: flex;
    flex-direction: column;
    gap: 8px;
    padding: 9px 0;
    border-bottom: 2px solid #cccecf;
    font-size: 19px;
}
.line {
    display: flex;
    align-items: center;
}
.line > label {
    width: 112px;
    text-align: right;
}
.line > svg {
    margin: 0 7px 0 8px;
}
.short .combo {
    height: 36px;
}
.field {
    display: flex;
    align-items: center;
    flex: 1;
    height: 40px;
    margin-right: -4px;
    padding-left: 3px;
    border: 2px solid #85888c;
    border-radius: 2px;
}
.field input {
    flex: 1;
    padding-left: 8px;
    border: none;
    background: none;
}
.side-body {
    display: flex;
    flex-direction: column;
    flex: 1;
    min-height: 0;
    padding: 5px 5px 0 4px;
}
.stack-title {
    gap: 7px;
    height: 38px;
    flex: none;
    padding-left: 4px;
    border: 1px solid #dde3e9;
    background: #e6f2fe;
    font-size: 23px;
}
.hier-row {
    display: flex;
    align-items: center;
    gap: 6px;
    height: 52px;
    flex: none;
    padding-left: 8px;
    background: linear-gradient(#f6f7f9, #e9eaec);
}
.hier-row svg:nth-child(2) {
    margin-left: 5px;
}
.hier-row .combo {
    margin: 0 3px;
}
.tools {
    display: flex;
    align-items: center;
    gap: 5px;
    flex: none;
    height: 44px;
    margin: 3px 0 5px;
    padding-left: 9px;
}
.tools button {
    justify-content: center;
    width: 44px;
    height: 44px;
}
.tools .on {
    background: #8db2e3;
}
.tools i {
    margin: 0 9px;
}
.tools .quick {
    flex: 1;
    height: 40px;
    margin-right: -6px;
    border-right: none;
    background: none;
}
.filter {
    display: flex;
    align-items: center;
    gap: 9px;
    flex: none;
    margin: 4px 0 8px;
    padding-left: 3px;
}
.filter input {
    width: 290px;
}

/* Tree */
.tree-box {
    flex: 1;
    min-height: 0;
    border: 2px solid #7b7e82;
    background: #fff;
}
.tree {
    display: grid;
    grid-auto-rows: 1fr;
    height: 384px;
    margin: 3px 0 0;
    padding: 0;
    list-style: none;
}
.tree li {
    display: flex;
    align-items: center;
    position: relative;
    gap: 9px;
}
.tree .knob {
    margin-right: -6px;
    overflow: visible;
}
.tree mark {
    align-self: stretch;
    display: flex;
    align-items: center;
    padding: 0 18px 0 2px;
    background: #b1d7fe;
    color: #7a0e2e;
    white-space: nowrap;
}
.l0 { padding-left: 3px; }
.l1 { padding-left: 10px; }
.l2 { padding-left: 47px; }
.l3 { padding-left: 84px; }
.l4 { padding-left: 121px; }
.l5 { padding-left: 158px; }
.l6 { padding-left: 195px; }
.tree .l6 {
    gap: 6px;
}
.tree .l6 .knob {
    margin-right: -5px;
}
.last::before {
    content: "";
    position: absolute;
    left: 18px;
    bottom: 22px;
    width: 1px;
    height: 126px;
    background: #6fb2dc;
}
.stack {
    height: 134px;
    flex: none;
    overflow: hidden;
    font-size: 23px;
}
.stack button {
    width: 100%;
    height: 41px;
    gap: 8px;
    padding: 6px 0 0 4px;
    border-bottom: 2px solid #dfe0e2;
}

/* Right panel */
.work {
    display: flex;
    flex-direction: column;
    min-width: 0;
    padding-top: 14px;
    overflow: hidden;
}
.tabs {
    display: flex;
    flex: none;
    border-bottom: 2px solid #85888c;
    font-size: 23px;
}
.tabs button, .sub-tabs button {
    flex: none;
    border: 2px solid #85888c;
    border-bottom: none;
    border-left-width: 1px;
    border-right-width: 1px;
    border-radius: 5px 5px 0 0;
    background: linear-gradient(#f4f5f6, #e6e7e9 35%, #cfd0d2 55%, #eceded);
}
.tabs button {
    gap: 9px;
    width: 307px;
    height: 35px;
    padding-left: 18px;
}
.work-body {
    display: flex;
    flex-direction: column;
    flex: 1;
    min-height: 0;
    padding-left: 6px;
    border-left: 2px solid #85888c;
}
.bar {
    display: flex;
    align-items: center;
    flex: none;
    height: 53px;
    background: linear-gradient(#f6f7f9, #e9eaec);
}
.bar button {
    gap: 8px;
}
.bar .pad {
    padding: 0 3px;
}
.bar i {
    margin: 0 10px;
}
.bar .pad + i {
    margin: 0 9px 0 10px;
}
.bar input {
    width: 250px;
    margin: 0 6px 0 12px;
    background: #ececee;
}
.bar .combo {
    margin-right: 8px;
}
.bar span, .bar label {
    white-space: nowrap;
    flex: none;
}
.grid-wrap {
    display: flex;
    flex-direction: column;
    flex: none;
    height: 585px;
    border: 2px solid #7b7e82;
    border-right: none;
}
.entities {
    width: 100%;
    table-layout: fixed;
    border-collapse: collapse;
}
.c-icon { width: 73px; }
.c-vintage { width: 110px; }
.c-mark { width: 55px; }
.entities th {
    height: 121px;
    padding: 0 1px;
    border-right: 2px solid #85888c;
    border-bottom: 2px solid #85888c;
    font-size: 19px;
    font-weight: normal;
}
.entities td {
    height: 33px;
    padding: 0 2px;
    border-right: 2px solid #c8cacc;
    border-bottom: 2px solid #c8cacc;
    background: #fff;
    white-space: nowrap;
}
.entities tr:nth-child(odd) td {
    background: #f3f4fe;
}
.entities .sel td, .entities tr.sel:nth-child(odd) td {
    background: #b1d7fe;
}
.entities svg {
    width: 26px;
    height: 26px;
    margin: 0 auto;
}
.entities .usd {
    color: #129a3a;
    font-weight: bold;
    font-size: 19px;
    text-align: center;
}
.scroll {
    display: flex;
    height: 28px;
    margin-top: auto;
    border-top: 2px solid #7b7e82;
}
.scroll button {
    justify-content: center;
    width: 28px;
    border-right: 2px solid #85888c;
    background: #f5f6f8;
}
.scroll svg {
    width: 8px;
    height: 14px;
}
.thumb {
    display: flex;
    align-items: center;
    justify-content: center;
    flex: 1;
    margin-right: -166px;
    background: linear-gradient(#b9dcfb, #74a7e4 50%, #86d8fd);
}
.thumb span {
    width: 25px;
    height: 14px;
    background: repeating-linear-gradient(90deg, #a9d1f8 0 2px, #79ace6 2px 5px);
}
.legend {
    display: flex;
    gap: 17px;
    margin: 12px 0 0 7px;
    font-size: 23px;
}
.legend span {
    display: flex;
    align-items: center;
    gap: 4px;
    flex: none;
    height: 29px;
}
.legend b {
    width: 55px;
    height: 29px;
    border: 2px solid #8d9094;
}
.calculated { background: #d8bfd8; }
.results { background: #ffe4cc; }
.indicators { background: #ccffcc; }
.custom { background: #8db2e3; }
.collapse {
    margin: 8px 0 0 3px;
}
.collapse svg {
    width: 40px;
    height: 12px;
}
h1 {
    margin: 17px 0 11px 1px;
    font-size: 21px;
    line-height: 26px;
    white-space: nowrap;
}
.detail-bar {
    display: flex;
    align-items: center;
    flex: none;
    height: 46px;
    padding-left: 11px;
    border-bottom: 2px solid #cccecf;
    background: linear-gradient(#f6f7f9, #e9eaec);
    font-size: 23px;
}
.detail-bar button {
    gap: 8px;
}
.detail-bar i {
    margin: 0 11px 0 10px;
}
.detail-tabs {
    align-items: flex-end;
    margin-top: 8px;
    padding-left: 1px;
}
.tabs .active {
    height: 41px;
    margin-bottom: -2px;
    background: #f5f6f8;
}
.tabs .t-forecasts { width: 177px; }
.tabs .t-summary { width: 173px; }
.tabs .t-history { width: 144px; }
.tabs .t-vol { width: 183px; }
.tabs .t-pz { width: 109px; }
.detail {
    display: flex;
    flex-direction: column;
    flex: 1;
    min-height: 0;
    padding-left: 3px;
    border-left: 2px solid #85888c;
}
.detail-tools {
    display: flex;
    align-items: center;
    gap: 10px;
    flex: none;
    height: 61px;
    padding: 0 0 4px 5px;
}
.detail-tools i + button {
    margin-left: 2px;
}
.sub-tabs {
    display: flex;
    flex: none;
    height: 30px;
    padding-left: 235px;
    font-size: 19px;
}
.sub-tabs button {
    justify-content: center;
    width: 86px;
}
.sub-body {
    display: flex;
    flex-direction: column;
    flex: 1;
    min-height: 0;
    padding-left: 4px;
    border-top: 2px solid #7b7e82;
    border-left: 2px solid #85888c;
}
.band {
    height: 50px;
    flex: none;
    margin-left: -4px;
    background: linear-gradient(#f6f7f9, #e6e7ea);
}
.segments-wrap {
    flex: 1;
    min-height: 0;
    overflow: hidden;
    border-top: 2px solid #7b7e82;
    border-left: 2px solid #85888c;
    background: linear-gradient(#f5f6f8 32px, #fff 32px);
}
.segments {
    width: 661px;
    table-layout: fixed;
    border-collapse: collapse;
    font-size: 19px;
}
.c-name { width: 220px; }
.segments th {
    height: 32px;
    padding: 0;
    border-right: 2px solid #7b7e82;
    border-bottom: 2px solid #7b7e82;
    background: #f5f6f8;
    font-weight: normal;
}
.segments td {
    height: 33px;
    padding: 0 2px 0 0;
    border-right: 2px solid #c0c1c3;
    border-bottom: 2px solid #c8c9ca;
    background: #ebebeb;
    text-align: right;
    white-space: nowrap;
}
.segments .end td {
    border-bottom-color: #8a8c8e;
}
.segments td.bad {
    background: #fb6565;
}
.segments svg {
    display: inline-block;
    width: 20px;
    height: 24px;
    margin-left: 7px;
    vertical-align: middle;
}

/* Menus */
.menu {
    position: absolute;
    padding: 1px 3px 2px 2px;
    border: 2px solid #6d7074;
    background: #fcfcfc;
    font-weight: bold;
}
.context {
    left: 775px;
    top: 1086px;
    width: 509px;
}
.export {
    left: 1272px;
    top: 2070px;
    width: 535px;
}
.menu button {
    gap: 8px;
    width: 100%;
    height: 39px;
    padding: 0 10px 0 37px;
    border: 2px solid transparent;
    border-radius: 2px;
}
.menu button:disabled {
    color: #9a9da2;
}
.menu .more {
    height: 43px;
}
.menu .open {
    border-color: #4594e8;
    background: #b1d7fe;
}
.menu .next {
    width: 8px;
    height: 14px;
    margin-left: auto;
}
.menu hr {
    height: 2px;
    margin: 1px 0;
    border: none;
    background: #d0d1d2;
}

/* Step markers */
.box {
    position: absolute;
    border: 4px solid #fb4040;
    filter: drop-shadow(0 6px 4px rgba(0, 0, 0, 0.4));
    pointer-events: none;
}
.box-1 {
    left: 136px;
    top: 478px;
    width: 876px;
    height: 83px;
}
.box-2 {
    left: 142px;
    top: 658px;
    width: 850px;
    height: 122px;
}
.box-3 {
    left: 439px;
    top: 1035px;
    width: 426px;
    height: 161px;
    border: 5px solid #e23a3a;
    border-left-color: #7c1d1d;
    border-right-color: #a02727;
    filter: drop-shadow(1px 4px 3px rgba(30, 70, 90, 0.6));
}
.box-4 {
    left: 1299px;
    top: 2349px;
    width: 311px;
    height: 47px;
    border-width: 3px;
    filter: drop-shadow(8px 10px 8px rgba(0, 0, 0, 0.2));
}
.step {
    position: absolute;
    width: 60px;
    height: 64px;
    fill: #fb4a4a;
    stroke: #000;
    stroke-width: 9px;
    stroke-linejoin: round;
    paint-order: stroke;
    font-size: 44px;
    font-weight: bold;
    text-anchor: middle;
    filter: drop-shadow(0 5px 3px rgba(0, 0, 0, 0.4));
}
.step-1 { left: 50px; top: 478px; }
.step-2 { left: 28px; top: 658px; }
.step-3 { left: 50px; top: 1084px; }
```
